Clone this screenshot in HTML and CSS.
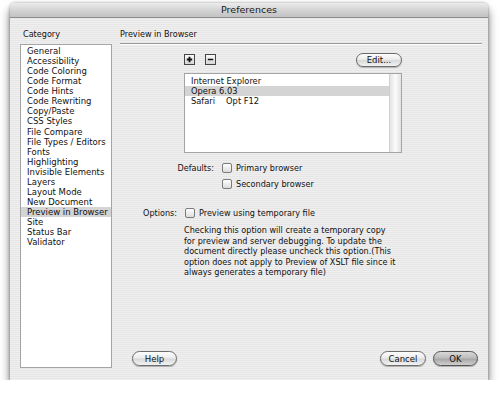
FILE: index.html
```html
<!DOCTYPE html>
<html lang="en">
<head>
    <meta charset="UTF-8">
    <title>Preferences</title>
    <link rel="stylesheet" href="styles.css">
</head>
<body>
    <div class="window">
        <div class="titlebar">Preferences</div>

        <div class="body">
            <div class="sidebar">
                <div class="heading">Category</div>
                <ul class="category-list">
                    <li>General</li>
                    <li>Accessibility</li>
                    <li>Code Coloring</li>
                    <li>Code Format</li>
                    <li>Code Hints</li>
                    <li>Code Rewriting</li>
                    <li>Copy/Paste</li>
                    <li>CSS Styles</li>
                    <li>File Compare</li>
                    <li>File Types / Editors</li>
                    <li>Fonts</li>
                    <li>Highlighting</li>
                    <li>Invisible Elements</li>
                    <li>Layers</li>
                    <li>Layout Mode</li>
                    <li>New Document</li>
                    <li class="selected">Preview in Browser</li>
                    <li>Site</li>
                    <li>Status Bar</li>
                    <li>Validator</li>
                </ul>
            </div>

            <div class="panel">
                <div class="heading">Preview in Browser</div>
                <div class="rule"></div>

                <div class="browsers">
                    <div class="toolbar">
                        <span class="icon-btn">
                            <svg width="10" height="10" viewBox="0 0 10 10">
                                <path d="M5 2v6M2 5h6" stroke="#111" stroke-width="2"/>
                            </svg>
                        </span>
                        <span class="icon-btn">
                            <svg width="10" height="10" viewBox="0 0 10 10">
                                <path d="M2 5h6" stroke="#111" stroke-width="1.6"/>
                            </svg>
                        </span>
                        <span class="pill edit">Edit...</span>
                    </div>
                    <div class="browser-list">
                        <ul>
                            <li>Internet Explorer</li>
                            <li class="selected">Opera 6.03</li>
                            <li>Safari<span class="key">Opt F12</span></li>
                        </ul>
                        <div class="scrollbar"></div>
                    </div>
                </div>

                <div class="defaults">
                    <span class="field-label">Defaults:</span>
                    <label class="check"><span class="box"></span>Primary browser</label>
                    <span></span>
                    <label class="check"><span class="box"></span>Secondary browser</label>
                </div>

                <div class="options">
                    <span class="field-label">Options:</span>
                    <label class="check"><span class="box"></span>Preview using temporary file</label>
                </div>

                <p class="note">Checking this option will create a temporary copy<br>for preview and server debugging. To update the<br>document directly please uncheck this option.(This<br>option does not apply to Preview of XSLT file since it<br>always generates a temporary file)</p>

                <div class="footer">
                    <span class="pill help">Help</span>
                    <span class="spacer"></span>
                    <span class="pill cancel">Cancel</span>
                    <span class="pill ok">OK</span>
                </div>
            </div>
        </div>
    </div>
</body>
</html>
```

FILE: styles.css
```css
body {
    margin: 0;
    background: #ffffff;
    font-family: "DejaVu Sans", sans-serif;
    font-size: 8.1px;
    color: #111;
}

.window {
    width: 478px;
    height: 377px;
    margin: 3px 0 0 10px;
    display: flex;
    flex-direction: column;
    border-radius: 5px 5px 0 0;
    background: repeating-linear-gradient(#efefef 0 1px, #e6e6e6 1px 2px);
    box-shadow: 0 6px 10px rgba(0, 0, 0, 0.55), 0 0 3px rgba(0, 0, 0, 0.35);
    overflow: hidden;
}

.titlebar {
    height: 14px;
    line-height: 14px;
    text-align: center;
    font-size: 9.5px;
    color: #1a1a1a;
    background: linear-gradient(#ececec, #d4d4d4 50%, #c2c2c2);
    border-bottom: 1px solid #8c8c8c;
}

.body {
    flex: 1;
    display: flex;
    padding: 11px 6px 12px 10px;
    gap: 8px;
}

.heading {
    height: 10px;
    line-height: 10px;
    padding-left: 3px;
}

.sidebar {
    width: 92px;
    display: flex;
    flex-direction: column;
}

.category-list {
    flex: 1;
    list-style: none;
    margin: 5px 0 0;
    padding: 1px 0 0;
    background: #fff;
    border: 1px solid #a4a4a4;
    font-size: 8.5px;
}

.category-list li {
    height: 10.07px;
    line-height: 10px;
    padding-left: 6px;
    white-space: nowrap;
}

.selected {
    background: #d4d4d4;
}

.panel {
    flex: 1;
    display: flex;
    flex-direction: column;
}

.panel .heading {
    padding-left: 0;
}

.rule {
    height: 1px;
    margin-top: 4px;
    background: #9a9a9a;
    box-shadow: 0 1px 0 #fafafa;
}

.browsers {
    width: 218px;
    margin: 9px 0 0 64px;
}

.toolbar {
    display: flex;
    align-items: flex-start;
    height: 14px;
}

.icon-btn {
    width: 9px;
    height: 9px;
    margin: 1px 10px 0 0;
    border: 1px solid #444;
    background: linear-gradient(#fafafa, #d6d6d6);
    display: flex;
}

.icon-btn svg {
    width: 9px;
    height: 9px;
}

.pill {
    display: inline-flex;
    align-items: center;
    justify-content: center;
    box-sizing: border-box;
    height: 15px;
    border-radius: 8px;
    border: 1px solid #6c6c6c;
    background: linear-gradient(#fdfdfd, #ececec 45%, #d9d9d9 55%, #f3f3f3);
    box-shadow: 0 1px 1px rgba(0, 0, 0, 0.25);
    font-size: 8.5px;
}

.edit {
    width: 46px;
    height: 14px;
    margin-left: auto;
}

.browser-list {
    display: flex;
    height: 80px;
    margin-top: 6px;
    background: #fff;
    border: 1px solid #a4a4a4;
    box-sizing: border-box;
}

.browser-list ul {
    flex: 1;
    list-style: none;
    margin: 0;
    padding: 2px 0 0;
    font-size: 8.3px;
}

.browser-list li {
    height: 10px;
    line-height: 10px;
    padding-left: 6px;
}

.key {
    margin-left: 11px;
}

.scrollbar {
    width: 11px;
    border-left: 1px solid #d0d0d0;
    background: linear-gradient(90deg, #e4e4e4, #fbfbfb 50%, #e2e2e2);
}

.check {
    display: flex;
    align-items: center;
    gap: 4px;
    height: 10px;
    white-space: nowrap;
}

.box {
    width: 8px;
    height: 8px;
    border: 1px solid #7a7a7a;
    border-radius: 2px;
    background: linear-gradient(#ffffff, #dcdcdc);
}

.field-label {
    height: 10px;
    line-height: 10px;
    text-align: right;
}

.defaults {
    display: grid;
    grid-template-columns: 44px auto;
    column-gap: 8px;
    row-gap: 6px;
    margin: 10px 0 0 50px;
}

.options {
    display: grid;
    grid-template-columns: 37px auto;
    column-gap: 8px;
    margin: 19px 0 0 20px;
}

.note {
    margin: 7px 0 0 64px;
    line-height: 10.5px;
    white-space: nowrap;
}

.footer {
    margin-top: auto;
    display: flex;
    gap: 7px;
    padding: 0 4px 2px 12px;
}

.spacer {
    flex: 1;
}

.help {
    width: 45px;
}

.cancel {
    width: 46px;
}

.ok {
    width: 45px;
    background: linear-gradient(#d8d8d8, #bdbdbd 45%, #a8a8a8 55%, #cfcfcf);
    border-color: #555;
}
```
